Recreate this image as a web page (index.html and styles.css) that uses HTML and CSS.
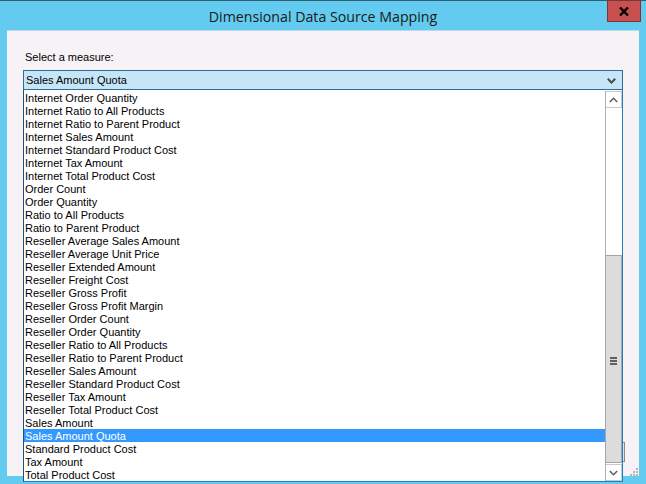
FILE: index.html
```html
<!DOCTYPE html>
<html>
<head>
<meta charset="utf-8">
<link rel="stylesheet" href="styles.css">
</head>
<body>
<div class="window">
  <div class="titlebar">
    <span class="title">Dimensional Data Source Mapping</span>
    <button class="close" aria-label="Close">
      <svg width="10" height="9" viewBox="0 0 10 9"><path d="M1 0.5 L9 8.5 M9 0.5 L1 8.5" stroke="#000" stroke-width="2.4"/></svg>
    </button>
  </div>
  <div class="panel">
    <div class="label">Select a measure:</div>
    <div class="combo">
      <span class="combo-text">Sales Amount Quota</span>
      <svg class="combo-arrow" width="9" height="6" viewBox="0 0 9 6"><path d="M0.8 0.8 L4.5 4.6 L8.2 0.8" fill="none" stroke="#4a4a4a" stroke-width="2"/></svg>
    </div>
    <div class="footer">
      <div class="btn"></div>
    </div>
    <div class="grip">
      <svg width="9" height="9" viewBox="0 0 9 9" fill="#b8b4b8"><rect x="7" y="1" width="2" height="2"/><rect x="4" y="4" width="2" height="2"/><rect x="7" y="4" width="2" height="2"/><rect x="1" y="7" width="2" height="2"/><rect x="4" y="7" width="2" height="2"/><rect x="7" y="7" width="2" height="2"/></svg>
    </div>
  </div>
  <div class="dropdown">
    <ul class="items">
      <li>Internet Order Quantity</li>
      <li>Internet Ratio to All Products</li>
      <li>Internet Ratio to Parent Product</li>
      <li>Internet Sales Amount</li>
      <li>Internet Standard Product Cost</li>
      <li>Internet Tax Amount</li>
      <li>Internet Total Product Cost</li>
      <li>Order Count</li>
      <li>Order Quantity</li>
      <li>Ratio to All Products</li>
      <li>Ratio to Parent Product</li>
      <li>Reseller Average Sales Amount</li>
      <li>Reseller Average Unit Price</li>
      <li>Reseller Extended Amount</li>
      <li>Reseller Freight Cost</li>
      <li>Reseller Gross Profit</li>
      <li>Reseller Gross Profit Margin</li>
      <li>Reseller Order Count</li>
      <li>Reseller Order Quantity</li>
      <li>Reseller Ratio to All Products</li>
      <li>Reseller Ratio to Parent Product</li>
      <li>Reseller Sales Amount</li>
      <li>Reseller Standard Product Cost</li>
      <li>Reseller Tax Amount</li>
      <li>Reseller Total Product Cost</li>
      <li>Sales Amount</li>
      <li class="selected">Sales Amount Quota</li>
      <li>Standard Product Cost</li>
      <li>Tax Amount</li>
      <li>Total Product Cost</li>
    </ul>
    <div class="scrollbar">
      <div class="sb-btn">
        <svg width="9" height="6" viewBox="0 0 9 6"><path d="M0.8 5 L4.5 1.3 L8.2 5" fill="none" stroke="#606060" stroke-width="1.6"/></svg>
      </div>
      <div class="track">
        <div class="thumb">
          <div class="grip-lines"><span></span><span></span><span></span></div>
        </div>
      </div>
      <div class="sb-btn">
        <svg width="9" height="6" viewBox="0 0 9 6"><path d="M0.8 1 L4.5 4.7 L8.2 1" fill="none" stroke="#606060" stroke-width="1.6"/></svg>
      </div>
    </div>
  </div>
</div>
</body>
</html>
```

FILE: styles.css
```css
* { box-sizing: border-box; }
html, body { margin: 0; padding: 0; }
body {
  width: 646px;
  height: 484px;
  overflow: hidden;
  font-family: "Liberation Sans", Arial, sans-serif;
  font-size: 11px;
  color: #000;
}
.window {
  position: relative;
  width: 646px;
  height: 484px;
  background: #63cbef;
  border-top: 1px solid #2f5d70;
  display: flex;
  flex-direction: column;
}
.titlebar {
  height: 29px;
  display: flex;
  align-items: center;
  justify-content: center;
  flex: none;
}
.title {
  font-family: "Open Sans", "Liberation Sans", sans-serif;
  font-size: 14.2px;
  color: #1a1a1a;
  margin-top: 1px;
}
.close {
  position: absolute;
  top: -1px;
  right: 5px;
  width: 34px;
  height: 22px;
  margin: 0;
  padding: 0;
  background: #c75050;
  border: 1px solid #7d3535;
  display: flex;
  align-items: center;
  justify-content: center;
}
.panel {
  position: relative;
  margin: 0 7px 0 7px;
  height: 446px;
  background: #f6f2f6;
  border-top: 1px solid #b9dcec;
  padding: 20px 16px 0 16px;
}
.label {
  height: 19px;
  line-height: 13px;
  padding-left: 2px;
}
.combo {
  height: 20px;
  width: 600px;
  background: #c6e6f7;
  border: 1px solid #2e6a9a;
  display: flex;
  align-items: center;
  justify-content: space-between;
  padding: 0 6px 0 2px;
}
.combo-text { line-height: 13px; }
.combo-arrow { margin-top: 1px; }
.footer {
  display: flex;
  justify-content: flex-end;
  width: 602px;
  margin-top: 352px;
}
.btn {
  width: 75px;
  height: 20px;
  border: 1px solid #8a8a8a;
  background: #e5e5e5;
}
.grip {
  position: absolute;
  right: 1px;
  bottom: 0;
  width: 9px;
  height: 9px;
  display: flex;
}
.dropdown {
  position: absolute;
  left: 23px;
  top: 89px;
  width: 600px;
  height: 392px;
  background: #fff;
  border: 1px solid #1f7fc4;
  border-top: none;
  border-left-color: #204f7a;
  padding-top: 1px;
  display: flex;
}
.items {
  list-style: none;
  margin: 0;
  padding: 0;
  flex: 1;
}
.items li {
  height: 13px;
  line-height: 12px;
  padding-top: 1px;
  padding-left: 1px;
  white-space: nowrap;
}
.items li.selected {
  background: #3399ff;
  color: #fff;
}
.scrollbar {
  width: 17px;
  display: flex;
  flex-direction: column;
  border-left: 1px solid #b0b0b0;
}
.sb-btn {
  height: 17px;
  flex: none;
  border: 1px solid #c9c9c9;
  border-left: none;
  background: #fff;
  display: flex;
  align-items: center;
  justify-content: center;
}
.track {
  flex: 1;
  background: #fff;
  padding-top: 147px;
}
.thumb {
  height: 208px;
  margin-left: -1px;
  background: #dcdcdc;
  border: 1px solid #a5a5a5;
  display: flex;
  align-items: center;
  justify-content: center;
}
.grip-lines {
  display: flex;
  flex-direction: column;
  gap: 1px;
  margin-top: 4px;
}
.grip-lines span {
  width: 7px;
  height: 2px;
  background: #5f5f5f;
}
```
